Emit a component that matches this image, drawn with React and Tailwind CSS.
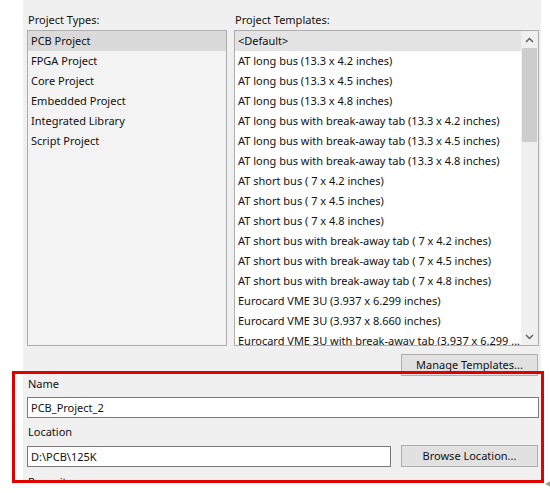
import React from "react";

const types = ["PCB Project", "FPGA Project", "Core Project", "Embedded Project", "Integrated Library", "Script Project"];

const templates = [
  "<Default>",
  "AT long bus (13.3 x 4.2 inches)",
  "AT long bus (13.3 x 4.5 inches)",
  "AT long bus (13.3 x 4.8 inches)",
  "AT long bus with break-away tab (13.3 x 4.2 inches)",
  "AT long bus with break-away tab (13.3 x 4.5 inches)",
  "AT long bus with break-away tab (13.3 x 4.8 inches)",
  "AT short bus ( 7 x 4.2 inches)",
  "AT short bus ( 7 x 4.5 inches)",
  "AT short bus ( 7 x 4.8 inches)",
  "AT short bus with break-away tab ( 7 x 4.2 inches)",
  "AT short bus with break-away tab ( 7 x 4.5 inches)",
  "AT short bus with break-away tab ( 7 x 4.8 inches)",
  "Eurocard VME 3U (3.937 x 6.299 inches)",
  "Eurocard VME 3U (3.937 x 8.660 inches)",
  "Eurocard VME 3U with break-away tab (3.937 x 6.299 ...",
];

function Chevron({ up }) {
  return (
    <svg width="9" height="6" viewBox="0 0 9 6">
      <path d={up ? "M1 5 L4.5 1.5 L8 5" : "M1 1 L4.5 4.5 L8 1"} fill="none" stroke="#606060" strokeWidth="1.5" />
    </svg>
  );
}

export default function App() {
  return (
    <div className="relative w-[550px] h-[493px] bg-white text-[11px] text-[#111] font-['Noto_Sans',sans-serif]">
      {/* dialog body */}
      <div className="ml-[23px] w-[518px] h-[483px] bg-[#f0f0f0] overflow-hidden pl-[4px] pt-[12px]">
        <div className="flex gap-[7px]">
          <div className="w-[200px]">
            <div className="h-[16px] leading-[16px] pl-[1px] mb-[2px]">Project Types:</div>
            <div className="h-[316px] border border-[#adadad] bg-[#f3f3f3]">
              {types.map((t, i) => (
                <div key={t} className={`h-[20px] leading-[20px] pl-[3px] ${i === 0 ? "bg-[#dadada]" : ""}`}>
                  {t}
                </div>
              ))}
            </div>
          </div>
          <div className="w-[305px]">
            <div className="h-[16px] leading-[16px] pl-[1px] mb-[2px]">Project Templates:</div>
            <div className="h-[316px] border border-[#adadad] bg-white flex overflow-hidden">
              <div className="flex-1 overflow-hidden">
                {templates.map((t, i) => (
                  <div key={t} className={`h-[20px] leading-[20px] pl-[3px] whitespace-nowrap ${i === 0 ? "bg-[#e3e3e3]" : ""}`}>
                    {t}
                  </div>
                ))}
              </div>
              <div className="w-[17px] bg-[#f0f0f0] flex flex-col">
                <div className="h-[17px] flex items-center justify-center">
                  <Chevron up />
                </div>
                <div className="mx-[1px] h-[94px] bg-[#cdcdcd]" />
                <div className="flex-1" />
                <div className="h-[17px] flex items-center justify-center">
                  <Chevron />
                </div>
              </div>
            </div>
          </div>
        </div>

        <div className="flex justify-end w-[511px] mt-[8px]">
          <button className="w-[137px] h-[22px] bg-[#e1e1e1] border border-[#adadad] leading-[20px]">Manage Templates...</button>
        </div>

        <div className="h-[16px] leading-[16px] pl-[1px]">Name</div>
        <div className="mt-[5px] w-[512px] h-[21px] border border-[#7a7a7a] bg-white pl-[3px] leading-[19px]">PCB_Project_2</div>

        <div className="mt-[6px] h-[16px] leading-[16px] pl-[1px]">Location</div>
        <div className="mt-[5px] flex items-center gap-[10px]">
          <div className="w-[364px] h-[21px] border border-[#7a7a7a] bg-white pl-[3px] leading-[19px]">D:\PCB\125K</div>
          <button className="w-[137px] h-[22px] bg-[#e1e1e1] border border-[#adadad] leading-[20px]">Browse Location...</button>
        </div>

        <div className="mt-[7px] h-[16px] leading-[16px] pl-[1px]">Repository</div>
      </div>

      {/* red highlight annotation */}
      <div className="absolute left-[12px] top-[371px] w-[532px] h-[112px] border-[3px] border-[#e00000]" />
      <div className="absolute left-[545px] top-[479px] text-[8px] text-[#9a9a9a] leading-none">◀</div>
    </div>
  );
}
